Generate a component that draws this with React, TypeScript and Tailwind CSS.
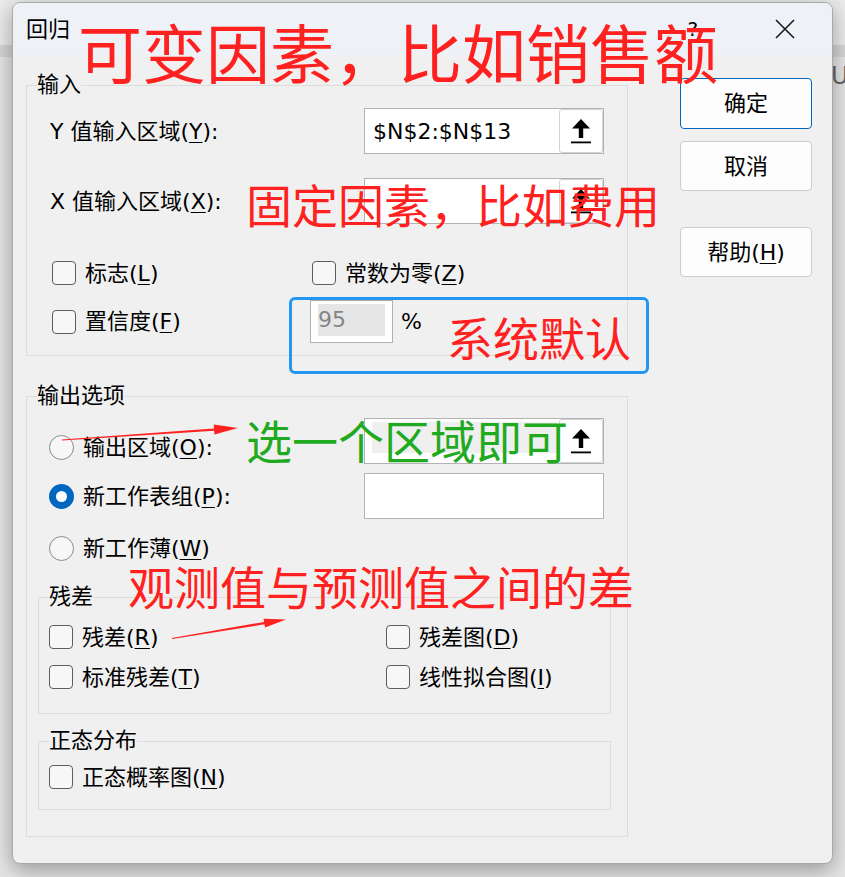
const red = 'text-[#ff2020]';

function U({ c }: { c: string }) {
  return <span className="underline decoration-1 underline-offset-[3px]">{c}</span>;
}

function Box() {
  return <span className="w-[24px] h-[24px] shrink-0 rounded-[4px] border border-[#5e5e5e] bg-[#f7f7f7]" />;
}

function Radio({ on }: { on?: boolean }) {
  if (on) {
    return (
      <span className="w-[25px] h-[25px] shrink-0 rounded-full bg-[#0067c0] flex items-center justify-center">
        <span className="w-[11px] h-[11px] rounded-full bg-white" />
      </span>
    );
  }
  return <span className="w-[25px] h-[25px] shrink-0 rounded-full border border-[#8a8a8a] bg-[#f7f7f7]" />;
}

function Check({ text, k, className = '' }: { text: string; k: string; className?: string }) {
  return (
    <div className={`flex items-center gap-[9px] ${className}`}>
      <Box />
      <span>
        {text}(<U c={k} />)
      </span>
    </div>
  );
}

// range picker button (arrow with a bar under it)
function PickBtn() {
  return (
    <span className="w-[44px] shrink-0 rounded-[3px] border border-[#d2d2d2] bg-white flex items-center justify-center">
      <svg width="20" height="25" viewBox="0 0 20 25">
        <path d="M10 0 L19 9.5 L12.2 9.5 L12.2 19 L7.8 19 L7.8 9.5 L1 9.5 Z" fill="#000" />
        <rect x="0" y="22.5" width="20" height="1.8" fill="#000" />
      </svg>
    </span>
  );
}

export default function App() {
  return (
    <div className="relative w-[845px] h-[877px] overflow-hidden pt-[2px] pl-[12px] text-[22px] leading-normal text-black font-['DejaVu_Sans','Noto_Sans_CJK_SC',sans-serif] bg-[#e6e6e6] bg-[image:linear-gradient(to_bottom,#ececec_45px,#d6d6d6_45px,#d6d6d6_57px,transparent_57px),linear-gradient(to_bottom,#c6c6c6_1px,transparent_1px),linear-gradient(to_right,#c6c6c6_1px,transparent_1px)] bg-size-[100%_100%,189px_58px,189px_58px] bg-position-[0_0,0_37px,171px_0] bg-no-repeat">
      <span className="absolute left-[831px] top-[58px] text-[24px] text-[#666]">U</span>

      {/* dialog */}
      <div className="relative z-10 w-[821px] h-[862px] rounded-[8px] border border-[#a9a9a9] bg-[#f0f0f0] shadow-[0_6px_22px_rgba(0,0,0,0.35)] flex flex-col overflow-hidden">
        <div className="h-[52px] shrink-0 flex items-center pl-[13px] pr-[37px] bg-[#eef2f7]">
          <span>回归</span>
          <span className="flex-1" />
          <span className="text-[20px]">?</span>
          <svg className="ml-[77px]" width="20" height="20" viewBox="0 0 20 20">
            <path d="M1 1 L19 19 M19 1 L1 19" stroke="#1a1a1a" strokeWidth="1.6" />
          </svg>
        </div>

        <div className="flex pl-[13px] pr-[20px]">
          <div className="w-[602px] pt-[18px]">
            <fieldset className="w-[602px] border border-[#dcdcdc] px-[10px] pb-[12px]">
              <legend className="leading-[24px]">输入</legend>
              <div className="mt-[11px] h-[46px] flex items-center px-[13px]">
                <span className="flex-1">
                  Y 值输入区域(<U c="Y" />):
                </span>
                <div className="w-[240px] h-[46px] border border-[#b3b3b3] bg-white flex">
                  <span className="flex-1 pl-[8px] flex items-center">$N$2:$N$13</span>
                  <PickBtn />
                </div>
              </div>
              <div className="mt-[24px] h-[46px] flex items-center px-[13px]">
                <span className="flex-1">
                  X 值输入区域(<U c="X" />):
                </span>
                <div className="w-[240px] h-[46px] border border-[#b3b3b3] bg-white flex">
                  <span className="flex-1" />
                  <PickBtn />
                </div>
              </div>
              <div className="mt-[34px] h-[30px] flex items-center pl-[15px]">
                <Check text="标志" k="L" className="w-[260px]" />
                <Check text="常数为零" k="Z" />
              </div>
              <div className="mt-[12px] h-[43px] flex items-center pl-[15px]">
                <Check text="置信度" k="F" className="w-[258px]" />
                <div className="w-[83px] h-[43px] border border-[#b0b0b0] bg-white">
                  <div className="ml-[7px] mt-[3px] w-[67px] h-[32px] bg-[#e6e6e6] text-[#858585] leading-[32px]">95</div>
                </div>
                <span className="ml-[8px]">%</span>
              </div>
            </fieldset>

            <fieldset className="mt-[28px] w-[602px] border border-[#dcdcdc] px-[10px] pb-[26px]">
              <legend className="leading-[24px]">输出选项</legend>
              <div className="mt-[10px] h-[46px] flex items-center pl-[12px] pr-[13px]">
                <div className="flex-1 flex items-center gap-[9px] mt-[12px]">
                  <Radio />
                  <span>
                    输出区域(<U c="O" />):
                  </span>
                </div>
                <div className="w-[240px] h-[46px] border border-[#b3b3b3] bg-white flex">
                  <span className="self-start ml-[7px] mr-[2px] mt-[3px] h-[31px] flex-1 bg-[#efefef]" />
                  <PickBtn />
                </div>
              </div>
              <div className="mt-[9px] h-[46px] flex items-center pl-[12px] pr-[13px]">
                <div className="flex-1 flex items-center gap-[9px]">
                  <Radio on />
                  <span>
                    新工作表组(<U c="P" />):
                  </span>
                </div>
                <div className="w-[240px] h-[46px] border border-[#b3b3b3] bg-white" />
              </div>
              <div className="mt-[14px] h-[30px] flex items-center gap-[9px] pl-[12px]">
                <Radio />
                <span>
                  新工作薄(<U c="W" />)
                </span>
              </div>

              <fieldset className="mt-[22px] ml-[1px] w-[573px] border border-[#dcdcdc] px-[10px] pb-[21px]">
                <legend className="leading-[24px]">残差</legend>
                <div className="mt-[13px] h-[30px] flex items-center">
                  <Check text="残差" k="R" className="w-[337px]" />
                  <Check text="残差图" k="D" />
                </div>
                <div className="mt-[10px] h-[30px] flex items-center">
                  <Check text="标准残差" k="T" className="w-[337px]" />
                  <Check text="线性拟合图" k="I" />
                </div>
              </fieldset>

              <fieldset className="mt-[15px] ml-[1px] w-[573px] border border-[#dcdcdc] px-[10px] pb-[17px]">
                <legend className="leading-[24px]">正态分布</legend>
                <div className="mt-[9px] h-[30px] flex items-center">
                  <Check text="正态概率图" k="N" />
                </div>
              </fieldset>
            </fieldset>
          </div>

          <div className="ml-[52px] w-[132px] pt-[23px] flex flex-col">
            <button className="h-[51px] rounded-[4px] border border-[#0067c0] bg-[#fdfdfd]">确定</button>
            <button className="mt-[12px] h-[50px] rounded-[4px] border border-[#cccccc] bg-[#fdfdfd]">取消</button>
            <button className="mt-[36px] h-[50px] rounded-[4px] border border-[#cccccc] bg-[#fdfdfd]">
              帮助(<U c="H" />)
            </button>
          </div>
        </div>
      </div>

      {/* annotations drawn on top of the dialog */}
      <div className="absolute inset-0 z-20 pointer-events-none font-['Noto_Sans_CJK_SC',sans-serif]">
        <span className={`absolute left-[78px] top-[18px] text-[64px] leading-none whitespace-nowrap ${red}`}>
          可变因素，比如销售额
        </span>
        <span className={`absolute left-[246px] top-[180px] text-[46px] leading-none whitespace-nowrap ${red}`}>
          固定因素，比如费用
        </span>
        <div className="absolute left-[289px] top-[297px] w-[360px] h-[77px] border-[3px] border-[#2196f3] rounded-[6px]" />
        <span className={`absolute left-[447px] top-[313px] text-[46px] leading-none whitespace-nowrap ${red}`}>
          系统默认
        </span>
        <span className="absolute left-[246px] top-[416px] text-[46px] leading-none whitespace-nowrap text-[#1faa1f]">
          选一个区域即可
        </span>
        <span className={`absolute left-[128px] top-[562px] text-[46px] leading-none whitespace-nowrap ${red}`}>
          观测值与预测值之间的差
        </span>
        <svg className="absolute left-0 top-0" width="845" height="877" viewBox="0 0 845 877">
          <path d="M61.97 439.5 L214 428.4 L213.8 424.6 L238 428 L214.4 434.6 L214.2 430.8 L62.03 440.5 Z" fill="#ff2020" />
          <path d="M171.9 637.9 L264.1 621.9 L263.6 618.7 L286 619.5 L265 627.5 L264.5 624.3 L172.1 639.1 Z" fill="#ff2020" />
        </svg>
      </div>
    </div>
  );
}
